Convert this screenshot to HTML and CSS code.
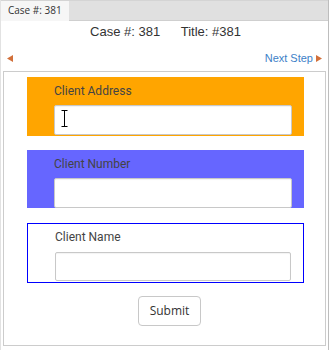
FILE: index.html
```html
<!DOCTYPE html>
<html>
<head>
<meta charset="utf-8">
<link rel="stylesheet" href="styles.css">
</head>
<body>
<div class="page">
  <div class="tabbar">
    <div class="tab">Case #: 381</div>
  </div>
  <div class="title-row">
    <span>Case #: 381</span>
    <span class="title">Title: #381</span>
  </div>
  <div class="nav-row">
    <svg class="arrow" width="6" height="7" viewBox="0 0 6 7"><path d="M6 0 L0 3.5 L6 7 Z" fill="#d2703a"/></svg>
    <span class="next">Next Step <svg class="arrow" width="6" height="7" viewBox="0 0 6 7"><path d="M0 0 L6 3.5 L0 7 Z" fill="#d2703a"/></svg></span>
  </div>
  <div class="panel">
    <div class="section orange">
      <div class="label">Client Address</div>
      <div class="input"></div>
      <svg class="ibeam" width="7" height="17" viewBox="0 0 7 17"><path d="M0.5 0.5 H6.5 M3.5 0.5 V16.5 M0.5 16.5 H6.5" stroke="#000" stroke-width="1" fill="none"/></svg>
    </div>
    <div class="section purple">
      <div class="label">Client Number</div>
      <div class="input"></div>
    </div>
    <div class="section outlined">
      <div class="label">Client Name</div>
      <div class="input"></div>
    </div>
    <div class="actions">
      <div class="button">Submit</div>
    </div>
  </div>
</div>
</body>
</html>
```
FILE: styles.css
```css
html, body {
  margin: 0;
  padding: 0;
  background: #fff;
}
.page {
  width: 329px;
  height: 350px;
  box-sizing: border-box;
  border-left: 1px solid #e2e2e2;
  border-right: 1px solid #bdbdbd;
  overflow: hidden;
}
.tabbar {
  height: 19px;
  background: #e0e0e0;
  border-top: 1px solid #d4d4d4;
  border-bottom: 1px solid #cfcfcf;
  display: flex;
}
.tab {
  width: 68px;
  height: 20px;
  background: #f6f6f6;
  font-family: "Open Sans", sans-serif;
  font-size: 10px;
  line-height: 19px;
  color: #333;
  padding-left: 7px;
  box-sizing: border-box;
}
.title-row {
  margin-top: 3px;
  height: 16px;
  line-height: 16px;
  text-align: center;
  font-family: "Liberation Sans", Arial, sans-serif;
  font-size: 13px;
  color: #333;
  padding-left: 2px;
}
.title {
  margin-left: 17px;
}
.nav-row {
  display: flex;
  justify-content: space-between;
  align-items: center;
  padding: 10px 6px 5px 6px;
  height: 16px;
  font-family: "Liberation Sans", Arial, sans-serif;
  font-size: 11px;
  color: #3d7fc8;
}
.next {
  display: flex;
  align-items: center;
  gap: 0;
}
.next .arrow {
  margin-left: 3px;
}
.panel {
  margin: 0 2px 0 2px;
  height: 275px;
  box-sizing: border-box;
  border: 1px solid #cccccc;
  padding: 5px 21px 0 23px;
}
.section {
  position: relative;
  box-sizing: border-box;
  padding: 6px 12px 1px 27px;
  margin-bottom: 14px;
}
.orange {
  background: #ffa500;
}
.purple {
  background: #6666ff;
  padding-bottom: 0;
  margin-bottom: 15px;
}
.outlined {
  border: 1px solid #0000ff;
  padding: 5px 12px 1px 27px;
  margin-bottom: 13px;
}
.label {
  font-family: "Roboto", sans-serif;
  font-size: 12px;
  line-height: 17px;
  color: #444;
  margin-bottom: 5px;
}
.outlined .label {
  margin-bottom: 6px;
}
.input {
  height: 30px;
  box-sizing: border-box;
  background: #fff;
  border: 1px solid #c8c8c8;
  border-radius: 2px;
  box-shadow: inset 0 1px 1px rgba(0,0,0,0.05);
}
.outlined .input {
  height: 29px;
}
.ibeam {
  position: absolute;
  left: 34px;
  top: 33px;
}
.actions {
  display: flex;
  justify-content: center;
  padding-left: 8px;
}
.button {
  height: 30px;
  box-sizing: border-box;
  border: 1px solid #c8c8c8;
  border-radius: 4px;
  padding: 0 11px;
  font-family: "Open Sans", sans-serif;
  font-size: 12px;
  line-height: 28px;
  color: #333;
  background: #fff;
}
```
